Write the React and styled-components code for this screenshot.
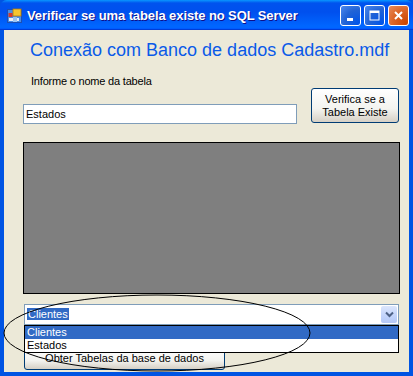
import styled, { createGlobalStyle } from "styled-components";

const GlobalStyle = createGlobalStyle`
  html, body {
    margin: 0;
    padding: 0;
    background: #ffffff;
  }
  body {
    font-family: "Liberation Sans", Arial, sans-serif;
  }
`;

const WindowBlock = styled.div`
  width: 413px;
  height: 376px;
  display: flex;
  flex-direction: column;
  background: #0054e3;
  position: relative;
  overflow: hidden;
`;

const TitleBarBlock = styled.div`
  height: 30px;
  flex: none;
  display: flex;
  align-items: center;
  padding: 0 4px 0 7px;
  box-sizing: border-box;
  background: linear-gradient(
    180deg,
    #0997ff 0%,
    #0053ee 10%,
    #0050ee 40%,
    #0066ff 86%,
    #0066ff 92%,
    #005bff 95%,
    #003dd7 97%,
    #003dd7 100%
  );
  border-radius: 7px 7px 0 0;
`;

const TitleText = styled.span`
  margin-left: 5px;
  color: #ffffff;
  font-weight: bold;
  font-size: 13px;
  letter-spacing: -0.1px;
  text-shadow: 1px 1px 0 #0f1089;
  flex: 1;
  white-space: nowrap;
`;

const CaptionButtons = styled.div`
  display: flex;
  gap: 3px;
`;

const CaptionButton = styled.div`
  width: 21px;
  height: 21px;
  box-sizing: border-box;
  border: 1px solid #ffffff;
  border-radius: 3px;
  display: flex;
  align-items: center;
  justify-content: center;
  background: ${(p) =>
    p.$close
      ? "radial-gradient(circle at 90% 90%, #cc4600 0%, #dc6527 55%, #e88c5c 100%)"
      : "radial-gradient(circle at 90% 90%, #0054e9 0%, #2263d5 55%, #4c89ef 100%)"};
`;

const ClientBlock = styled.div`
  flex: 1;
  margin: 0 4px 4px 4px;
  background: #ece9d8;
  padding: 10px 0 0 0;
  display: flex;
  flex-direction: column;
`;

const Heading = styled.div`
  margin-left: 26px;
  font-size: 18px;
  color: #0a5ae8;
  line-height: 21px;
`;

const InputRow = styled.div`
  display: grid;
  grid-template-columns: 274px 88px;
  justify-content: space-between;
  margin: 14px 10px 0 19px;
`;

const LeftColumn = styled.div`
  display: flex;
  flex-direction: column;
`;

const LabelText = styled.div`
  margin-left: 8px;
  font-size: 11px;
  line-height: 13px;
  letter-spacing: -0.2px;
  color: #000000;
`;

const TextInput = styled.div`
  margin-top: 16px;
  height: 20px;
  box-sizing: border-box;
  border: 1px solid #7f9db9;
  background: #ffffff;
  font-size: 11px;
  line-height: 18px;
  padding-left: 2px;
`;

const PushButton = styled.div`
  margin-top: ${(p) => p.$top || 0}px;
  width: ${(p) => p.$width}px;
  height: ${(p) => p.$height}px;
  box-sizing: border-box;
  border: 1px solid #003c74;
  border-radius: 3px;
  background: linear-gradient(180deg, #ffffff 0%, #f3f3ef 60%, #d6d0c5 100%);
  font-size: 11px;
  line-height: 13px;
  text-align: center;
  display: flex;
  align-items: center;
  justify-content: center;
  color: #000000;
`;

const GridPanel = styled.div`
  margin: 18px 9px 0 19px;
  height: 152px;
  box-sizing: border-box;
  border: 1px solid #000000;
  background: #7f7f7f;
`;

const ComboWrap = styled.div`
  position: relative;
  margin: 10px 10px 0 20px;
`;

const ComboBox = styled.div`
  height: 21px;
  box-sizing: border-box;
  border: 1px solid #7f9db9;
  background: #ffffff;
  display: flex;
  align-items: center;
  padding: 0 1px 0 2px;
`;

const ComboText = styled.span`
  flex: 1;
  font-size: 11px;
  line-height: 13px;
`;

const SelectedText = styled.span`
  background: #316ac5;
  color: #ffffff;
  padding: 0 1px;
`;

const ComboArrow = styled.div`
  width: 16px;
  height: 17px;
  border-radius: 2px;
  background: linear-gradient(180deg, #dce6fc 0%, #c1d3fb 60%, #b4c8f6 100%);
  display: flex;
  align-items: center;
  justify-content: center;
`;

const DropList = styled.div`
  position: absolute;
  left: 0;
  right: 0;
  top: 21px;
  border: 1px solid #000000;
  background: #ffffff;
  z-index: 2;
`;

const DropItem = styled.div`
  height: 13px;
  font-size: 11px;
  line-height: 13px;
  padding-left: 2px;
  background: ${(p) => (p.$active ? "#316ac5" : "#ffffff")};
  color: ${(p) => (p.$active ? "#ffffff" : "#000000")};
`;

const BottomRow = styled.div`
  margin-left: 20px;
`;

const Annotation = styled.svg`
  position: absolute;
  left: 0;
  top: 0;
  pointer-events: none;
  z-index: 3;
`;

function AppIcon() {
  return (
    <svg width="15" height="15" viewBox="0 0 15 15">
      <rect x="0.5" y="1.5" width="14" height="13" fill="#4a8de6" stroke="#1c4fb3" />
      <rect x="6" y="1" width="8" height="7" fill="#f6c531" stroke="#b07a10" strokeWidth="0.8" />
      <rect x="1.5" y="5" width="4" height="4" fill="#d93a2b" />
      <rect x="2" y="10" width="10" height="3" fill="#e8eef8" />
      <rect x="6" y="9" width="4" height="5" fill="#9cc3f0" />
    </svg>
  );
}

export default function App() {
  return (
    <>
      <GlobalStyle />
      <WindowBlock>
        <TitleBarBlock>
          <AppIcon />
          <TitleText>Verificar se uma tabela existe no SQL Server</TitleText>
          <CaptionButtons>
            <CaptionButton>
              <svg width="13" height="13" viewBox="0 0 13 13">
                <rect x="3" y="9" width="6" height="3" fill="#ffffff" />
              </svg>
            </CaptionButton>
            <CaptionButton>
              <svg width="13" height="13" viewBox="0 0 13 13">
                <rect x="2" y="2" width="9" height="9" fill="none" stroke="#ffffff" strokeWidth="1" />
                <rect x="2" y="2" width="9" height="2" fill="#ffffff" />
              </svg>
            </CaptionButton>
            <CaptionButton $close>
              <svg width="13" height="13" viewBox="0 0 13 13">
                <path d="M3 3 L10 10 M10 3 L3 10" stroke="#ffffff" strokeWidth="2" />
              </svg>
            </CaptionButton>
          </CaptionButtons>
        </TitleBarBlock>
        <ClientBlock>
          <Heading>Conexão com Banco de dados Cadastro.mdf</Heading>
          <InputRow>
            <LeftColumn>
              <LabelText>Informe o nome da tabela</LabelText>
              <TextInput>Estados</TextInput>
            </LeftColumn>
            <PushButton $top={13} $width={88} $height={35}>
              Verifica se a
              <br />
              Tabela Existe
            </PushButton>
          </InputRow>
          <GridPanel />
          <ComboWrap>
            <ComboBox>
              <ComboText>
                <SelectedText>Clientes</SelectedText>
              </ComboText>
              <ComboArrow>
                <svg width="9" height="7" viewBox="0 0 9 7">
                  <path d="M1 1.5 L4.5 5 L8 1.5" fill="none" stroke="#4d6185" strokeWidth="2" />
                </svg>
              </ComboArrow>
            </ComboBox>
            <DropList>
              <DropItem $active>Clientes</DropItem>
              <DropItem>Estados</DropItem>
            </DropList>
          </ComboWrap>
          <BottomRow>
            <PushButton $top={22} $width={201} $height={23}>
              Obter Tabelas da base de dados
            </PushButton>
          </BottomRow>
        </ClientBlock>
        <Annotation width="413" height="376" viewBox="0 0 413 376">
          <ellipse cx="157" cy="333" rx="153" ry="38" fill="none" stroke="#000000" strokeWidth="1" />
        </Annotation>
      </WindowBlock>
    </>
  );
}
